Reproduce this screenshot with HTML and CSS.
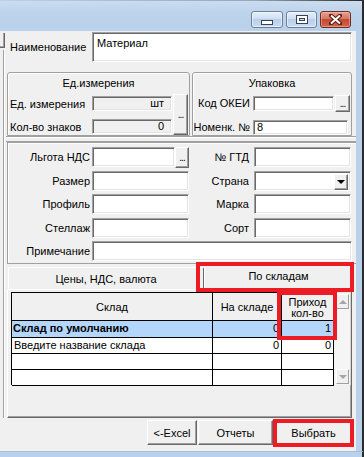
FILE: index.html
```html
<!DOCTYPE html>
<html lang="ru">
<head>
  <meta charset="UTF-8" />
  <title>Материал</title>
  <link rel="stylesheet" href="styles.css">
</head>
<body>
<div class="window">
  <div class="frame-top"></div>
  <div class="titlebar">
    <div class="caption-btn"><span class="glyph-min"></span></div>
    <div class="caption-btn"><span class="glyph-max"></span></div>
    <div class="caption-btn close">
      <svg width="13" height="11" viewBox="0 0 13 11">
        <path d="M2 1.5 L11 9.5 M11 1.5 L2 9.5" stroke="#5a1e14" stroke-width="4" stroke-linecap="square" fill="none"/>
        <path d="M2 1.5 L11 9.5 M11 1.5 L2 9.5" stroke="#ffffff" stroke-width="2" fill="none"/>
      </svg>
    </div>
  </div>

  <div class="frame">
    <div class="client">
      <div class="stub">
        <div class="stub-btn"></div>
        <div class="stub-line"></div>
      </div>

      <div class="main">
        <div class="name-row">
          <div class="name-label">Наименование</div>
          <div class="field memo">Материал</div>
        </div>

        <div class="units">
          <div class="group group-left">
            <div class="group-head">Ед.измерения</div>
            <div class="group-body">
              <div class="unit-fields">
                <div class="unit-row">
                  <span class="unit-label">Ед. измерения</span>
                  <div class="field ro unit-field">шт</div>
                </div>
                <div class="unit-row">
                  <span class="unit-label">Кол-во знаков</span>
                  <div class="field ro unit-field">0</div>
                </div>
              </div>
              <div class="btn dots dots-tall">...</div>
            </div>
          </div>

          <div class="group group-right">
            <div class="group-head">Упаковка</div>
            <div class="pack-row">
              <span class="pack-label">Код ОКЕИ</span>
              <div class="field pack-okei"></div>
              <div class="btn dots dots-small">...</div>
            </div>
            <div class="pack-row second">
              <span class="pack-label">Номенк. №</span>
              <div class="field pack-num">8</div>
            </div>
          </div>
        </div>

        <div class="sep"></div>

        <div class="attrs">
          <span class="attr-label">Льгота НДС</span>
          <div class="attr-pick">
            <div class="field grow"></div>
            <div class="btn dots dots-attr">...</div>
          </div>
          <span class="attr-label right">№ ГТД</span>
          <div class="field attr-right"></div>

          <span class="attr-label">Размер</span>
          <div class="field"></div>
          <span class="attr-label right">Страна</span>
          <div class="field attr-right combo">
            <div class="btn combo-btn"><span class="arrow-down"></span></div>
          </div>

          <span class="attr-label">Профиль</span>
          <div class="field"></div>
          <span class="attr-label right">Марка</span>
          <div class="field attr-right"></div>

          <span class="attr-label">Стеллаж</span>
          <div class="field"></div>
          <span class="attr-label right">Сорт</span>
          <div class="field attr-right"></div>

          <span class="attr-label">Примечание</span>
          <div class="field wide"></div>
        </div>

        <div class="tabs">
          <div class="tab-strip">
            <div class="tab">Цены, НДС, валюта</div>
            <div class="tab active">По складам</div>
          </div>
          <div class="tab-panel">
            <div class="grid">
              <div class="grid-table">
                <div class="cell head">Склад</div>
                <div class="cell head">На складе</div>
                <div class="cell head">Приход<br>кол-во</div>

                <div class="cell sel bold">Склад по умолчанию</div>
                <div class="cell sel num">0</div>
                <div class="cell sel num">1</div>

                <div class="cell">Введите название склада</div>
                <div class="cell num">0</div>
                <div class="cell num">0</div>

                <div class="cell"></div>
                <div class="cell"></div>
                <div class="cell"></div>

                <div class="cell"></div>
                <div class="cell"></div>
                <div class="cell"></div>
              </div>
              <div class="scrollbar">
                <div class="sb-btn"><span class="arrow-up"></span></div>
                <div class="sb-track"></div>
                <div class="sb-btn"><span class="arrow-dn"></span></div>
              </div>
            </div>
          </div>
        </div>

        <div class="actions">
          <div class="btn action excel">&lt;-Excel</div>
          <div class="btn action reports">Отчеты</div>
          <div class="btn action choose">Выбрать</div>
        </div>
      </div>
    </div>
    <div class="frame-right"></div>
  </div>
  <div class="frame-bottom"></div>

  <div class="mark mark-tab"></div>
  <div class="mark mark-col"></div>
  <div class="mark mark-btn"></div>
</div>
</body>
</html>
```

FILE: styles.css
```css
* {
  box-sizing: border-box;
}
body {
  margin: 0;
  font-family: 'Liberation Sans', Arial, sans-serif;
  font-size: 11px;
  color: #000;
  background: #b9d1ea;
}
.window {
  position: relative;
  width: 364px;
  height: 457px;
  overflow: hidden;
  background: #b9d1ea;
}
.frame-top {
  height: 1px;
  background: linear-gradient(to right, rgba(40,40,40,0) 0, rgba(40,40,40,0.25) 70%, #2a2a2a 100%);
}

/* title bar */
.titlebar {
  height: 30px;
  display: flex;
  justify-content: flex-end;
  gap: 3px;
  padding: 10px 11px 0 0;
  background: linear-gradient(#cadcef, #bcd3ec 40%, #b9d1ea);
  border-right: 2px solid #2a2a2a;
}
.caption-btn {
  width: 32px;
  height: 17px;
  display: flex;
  align-items: center;
  justify-content: center;
  border: 1px solid #6b7f9b;
  border-radius: 3px;
  background: linear-gradient(#e6eff9, #cfdff1 45%, #b9cfe9 50%, #c9dbf0);
  box-shadow: inset 0 0 0 1px rgba(255,255,255,0.55);
}
.caption-btn + .caption-btn {
  width: 31px;
}
.caption-btn.close {
  border-color: #6e2c22;
  background: linear-gradient(#e7a08e, #d67662 45%, #c44a31 50%, #cf664c);
  box-shadow: inset 0 0 0 1px rgba(255,200,190,0.45);
}
.glyph-min {
  width: 12px;
  height: 5px;
  margin-top: 6px;
  background: #fff;
  border: 1px solid #34425a;
}
.glyph-max {
  width: 12px;
  height: 9px;
  background: #fff;
  border: 1px solid #34425a;
  box-shadow: inset 0 0 0 2px #fff, inset 0 0 0 3px #34425a;
  background: #ccdcef;
}

/* frame */
.frame {
  display: flex;
  height: 420px;
}
.client {
  width: 356px;
  display: flex;
  background: #f0f0f0;
}
.frame-right {
  width: 8px;
  background: #b9d1ea;
  border-right: 2px solid #2a2a2a;
}
.frame-bottom {
  height: 6px;
  background: #b9d1ea;
  border-top: 1px solid #a9bfd6;
  border-right: 2px solid #2a2a2a;
}

/* cut-off column on the left */
.stub {
  width: 6px;
  display: flex;
  flex-direction: column;
}
.stub-btn {
  width: 5px;
  height: 15px;
  margin-top: 2px;
  background: #f0f0f0;
  border-right: 1px solid #696969;
  border-bottom: 1px solid #696969;
  box-shadow: inset -1px -1px 0 #a0a0a0;
}
.stub-line {
  width: 4px;
  height: 368px;
  margin-top: 2px;
  border-right: 1px solid #a0a0a0;
  box-shadow: 1px 0 0 #fff;
}

.main {
  width: 350px;
  display: flex;
  flex-direction: column;
}

/* shared controls */
.field {
  background: #fff;
  border: 1px solid;
  border-color: #a0a0a0 #fff #fff #a0a0a0;
  box-shadow: inset 1px 1px 0 #696969, inset -1px -1px 0 #e3e3e3;
  line-height: 13px;
  padding: 0 3px;
  white-space: nowrap;
}
.field.ro {
  background: #f0f0f0;
  text-align: right;
  padding-right: 7px;
}
.btn {
  background: #f0f0f0;
  border: 1px solid;
  border-color: #fff #696969 #696969 #fff;
  box-shadow: inset -1px -1px 0 #a0a0a0;
  display: flex;
  align-items: center;
  justify-content: center;
}
.dots {
  font-size: 10px;
  letter-spacing: -1px;
  line-height: 1;
}

/* name */
.name-row {
  height: 32px;
  display: flex;
}
.name-label {
  width: 86px;
  padding: 10px 0 0 4px;
}
.memo {
  width: 260px;
  height: 30px;
  margin-top: 1px;
  padding: 4px 4px;
}

/* units / package */
.units {
  display: flex;
  gap: 2px;
  height: 64px;
  margin-top: 9px;
}
.group {
  border: 1px solid #a0a0a0;
  border-radius: 3px 3px 0 0;
  box-shadow: inset 1px 1px 0 #fff;
}
.group-left {
  width: 183px;
  margin-left: 1px;
}
.group-right {
  width: 160px;
}
.group-head {
  height: 19px;
  line-height: 20px;
  text-align: center;
}
.group-body {
  display: flex;
}
.unit-fields {
  display: flex;
  flex-direction: column;
  gap: 8px;
  padding-top: 4px;
}
.unit-row {
  display: flex;
  align-items: center;
  height: 15px;
}
.unit-label {
  width: 84px;
  padding-left: 2px;
}
.unit-field {
  width: 80px;
  height: 15px;
}
.dots-tall {
  width: 15px;
  height: 41px;
  margin: 2px 0 0 1px;
}
.pack-row {
  display: flex;
  align-items: flex-start;
  height: 15px;
  margin-top: 4px;
}
.pack-row.second {
  margin-top: 9px;
}
.pack-label {
  width: 60px;
  text-align: right;
  padding-right: 3px;
  line-height: 15px;
}
.pack-okei {
  width: 81px;
  height: 15px;
}
.dots-small {
  width: 15px;
  height: 17px;
  margin: -1px 0 0 1px;
}
.pack-num {
  width: 95px;
  height: 15px;
}

.sep {
  height: 6px;
  border-top: 1px solid #a0a0a0;
  border-bottom: 1px solid #a0a0a0;
  box-shadow: inset 0 1px 0 #fff;
}

/* attributes */
.attrs {
  height: 122px;
  margin-left: 1px;
  padding: 4px 0 3px;
  display: grid;
  grid-template-columns: 84px 97px 64px 98px;
  grid-template-rows: repeat(5, 20px);
  row-gap: 3.5px;
  border: 1px solid #a0a0a0;
  border-right: none;
  box-shadow: inset 1px 1px 0 #fff;
}
.attr-label {
  text-align: right;
  line-height: 20px;
  padding-right: 2px;
}
.attr-label.right {
  padding-right: 4px;
}
.attr-pick {
  display: flex;
}
.grow {
  flex: 1;
}
.dots-attr {
  width: 14px;
  height: 21px;
}
.attr-right {
  margin-left: 1px;
  width: 97px;
}
.combo {
  display: flex;
  justify-content: flex-end;
  padding: 2px;
}
.combo-btn {
  width: 14px;
  height: 16px;
}
.arrow-down {
  width: 0;
  height: 0;
  border-left: 4px solid transparent;
  border-right: 4px solid transparent;
  border-top: 4px solid #000;
}
.wide {
  grid-column: 2 / 5;
  width: 260px;
}

/* tabs */
.tabs {
  height: 154px;
  display: flex;
  flex-direction: column;
}
.tab-strip {
  height: 25px;
  display: flex;
  align-items: flex-end;
  padding-left: 2px;
}
.tab {
  width: 196px;
  height: 22px;
  line-height: 22px;
  text-align: center;
  border: 1px solid;
  border-color: #fff #696969 transparent #fff;
  border-radius: 2px 2px 0 0;
}
.tab.active {
  width: 149px;
  height: 24px;
  line-height: 20px;
}
.tab-panel {
  width: 345px;
  height: 129px;
  margin-left: 1px;
  padding: 2px 0 0 3px;
  border: 1px solid;
  border-color: #fff #696969 #696969 #fff;
  box-shadow: inset -1px -1px 0 #a0a0a0;
}
.grid {
  display: flex;
  height: 93px;
}
.grid-table {
  width: 323px;
  display: grid;
  grid-template-columns: 201px 69px 52px;
  grid-template-rows: 28px 17px 16px 16px 16px;
  border-left: 1px solid #000;
  border-top: 1px solid #000;
  background: #fff;
}
.cell {
  border-right: 1px solid #000;
  border-bottom: 1px solid #000;
  padding: 0 2px;
  line-height: 15px;
  white-space: nowrap;
  overflow: hidden;
}
.cell.head {
  background: #f0f0f0;
  display: flex;
  align-items: center;
  justify-content: center;
  text-align: center;
  line-height: 11px;
  padding-top: 2px;
}
.cell.sel {
  background: #b5d6fb;
}
.cell.bold {
  font-weight: bold;
  padding-left: 1px;
}
.cell.num {
  text-align: right;
}
.scrollbar {
  width: 17px;
  display: flex;
  flex-direction: column;
  padding: 1px 1px 1px 2px;
  background: #f5f5f5;
  border-top: 1px solid #e3e3e3;
  border-right: 1px solid #d5d5d5;
}
.sb-btn {
  height: 15px;
  background: #f0f0f0;
  border: 1px solid;
  border-color: #fff #a0a0a0 #a0a0a0 #fff;
  display: flex;
  align-items: center;
  justify-content: center;
}
.sb-track {
  flex: 1;
}
.arrow-up, .arrow-dn {
  width: 0;
  height: 0;
  border-left: 4px solid transparent;
  border-right: 4px solid transparent;
}
.arrow-up {
  border-bottom: 4px solid #a6a6a6;
}
.arrow-dn {
  border-top: 4px solid #a6a6a6;
}

/* buttons */
.actions {
  height: 33px;
  display: flex;
  justify-content: flex-end;
  align-items: flex-start;
  padding: 2px 4px 0 0;
}
.action {
  height: 25px;
}
.excel {
  width: 50px;
  margin-right: 1px;
}
.reports {
  width: 75px;
  margin-right: 2px;
}
.choose {
  width: 77px;
}

/* red annotation frames */
.mark {
  position: absolute;
  border: 4px solid #ed1c24;
}
.mark-tab {
  left: 196px;
  top: 262px;
  width: 158px;
  height: 30px;
}
.mark-col {
  left: 277px;
  top: 291px;
  width: 60px;
  height: 49px;
}
.mark-btn {
  left: 273px;
  top: 419px;
  width: 81px;
  height: 28px;
}
```
